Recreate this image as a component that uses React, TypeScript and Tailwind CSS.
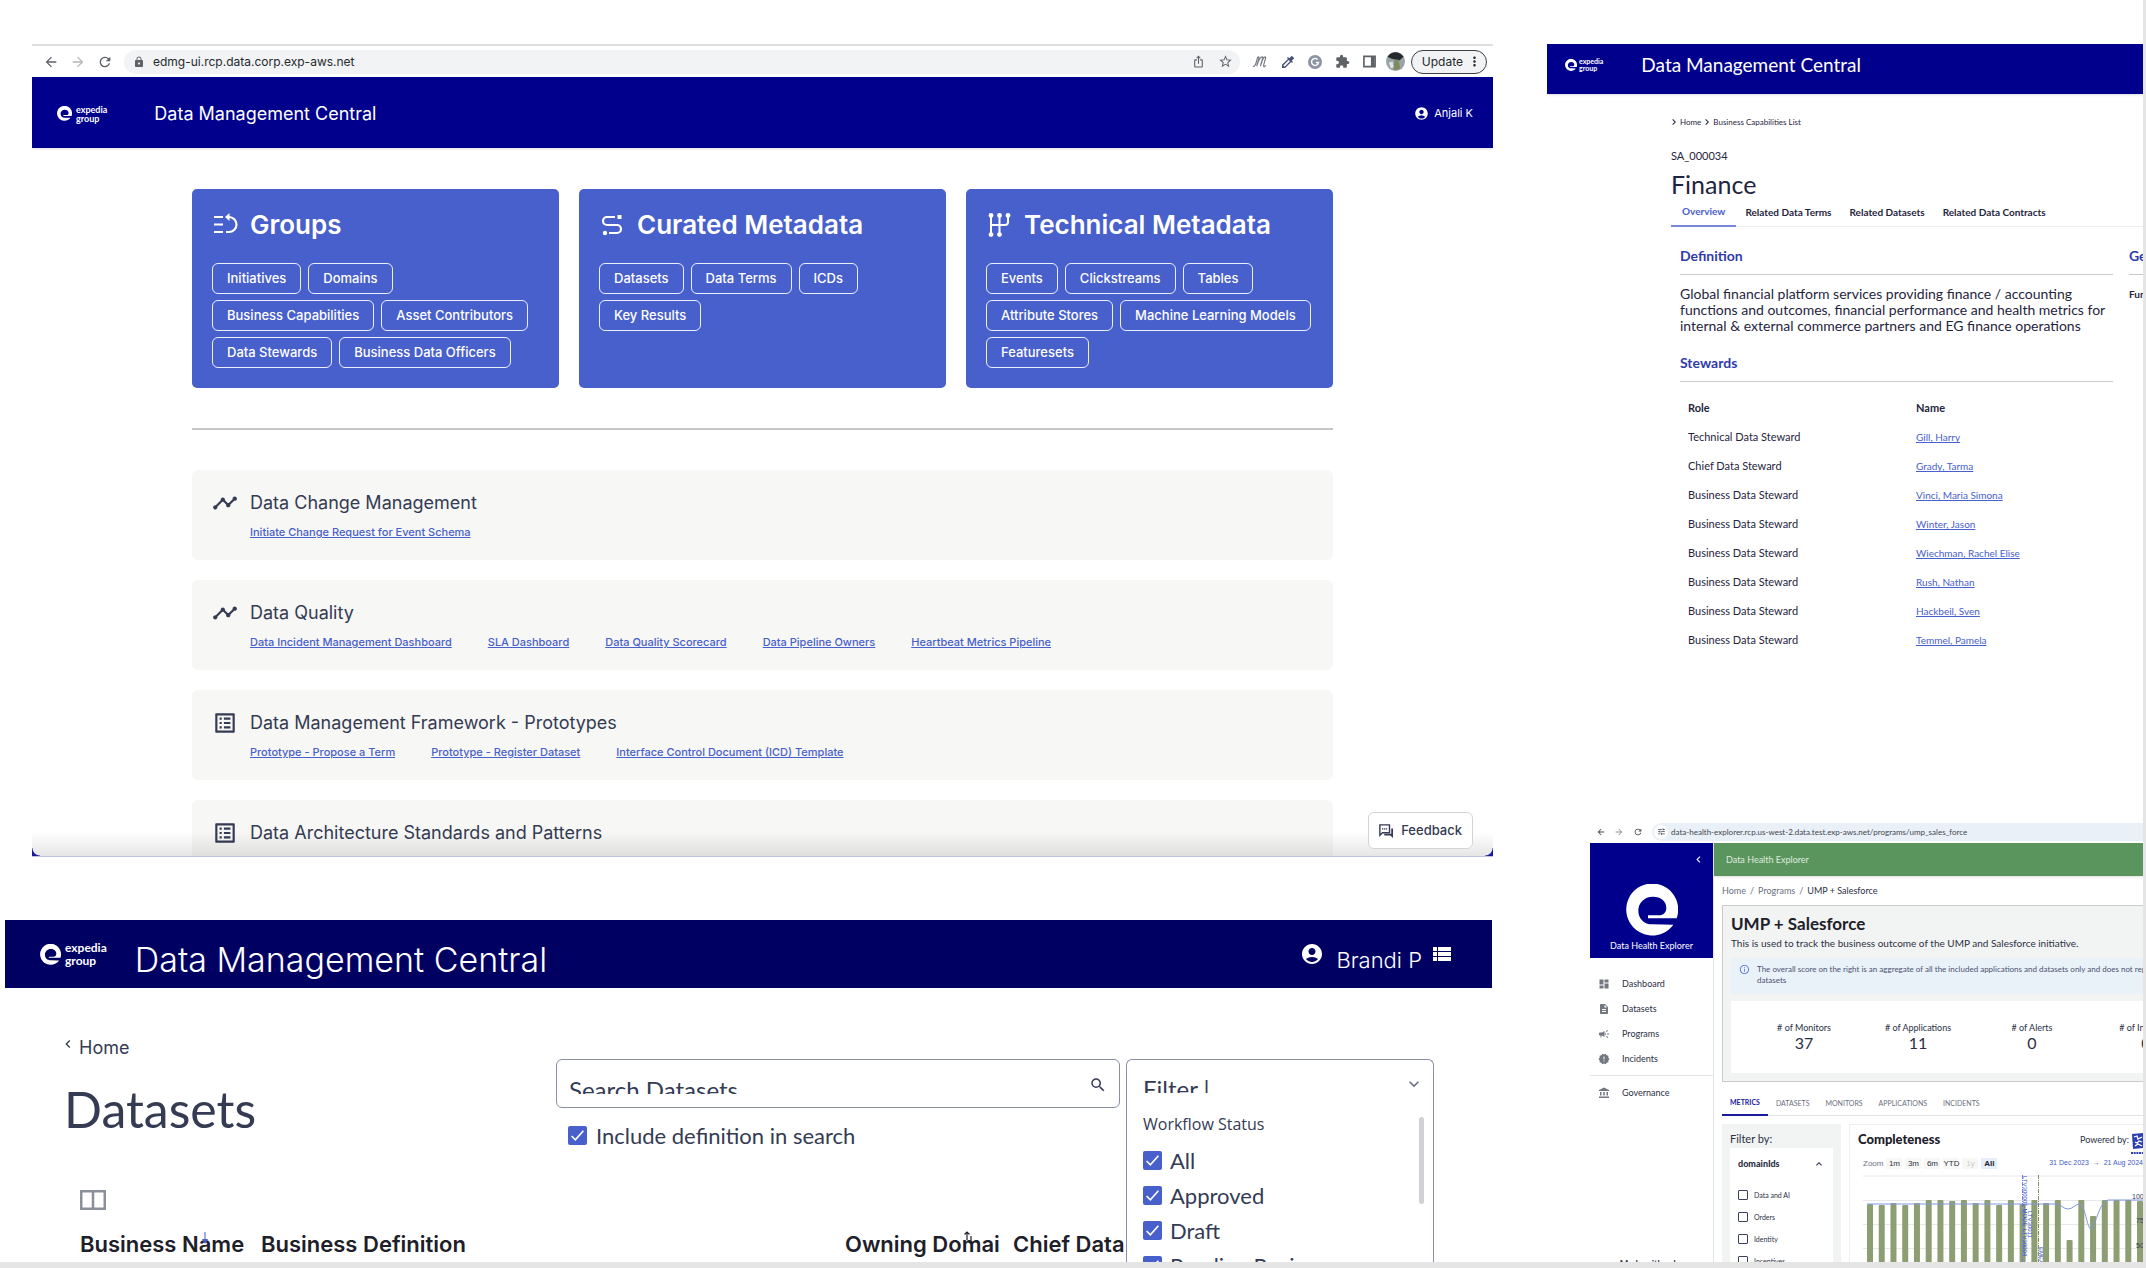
import React, { useState } from 'react';
import {
  MdAccountBalance,
  MdAccountCircle,
  MdArrowBack,
  MdArrowForward,
  MdCampaign,
  MdChevronLeft,
  MdChevronRight,
  MdColorize,
  MdDashboard,
  MdDescription,
  MdExpandLess,
  MdExpandMore,
  MdExtension,
  MdInfoOutline,
  MdIosShare,
  MdListAlt,
  MdLock,
  MdMoreVert,
  MdNewReleases,
  MdRefresh,
  MdSearch,
  MdStarBorder,
  MdTimeline,
  MdTune,
  MdViewList,
} from 'react-icons/md';

const CARDS = [
  {
    title: 'Groups',
    icon: 'groups',
    items: ['Initiatives', 'Domains', 'Business Capabilities', 'Asset Contributors', 'Data Stewards', 'Business Data Officers'],
  },
  { title: 'Curated Metadata', icon: 'curated', items: ['Datasets', 'Data Terms', 'ICDs', 'Key Results'] },
  {
    title: 'Technical Metadata',
    icon: 'technical',
    items: ['Events', 'Clickstreams', 'Tables', 'Attribute Stores', 'Machine Learning Models', 'Featuresets'],
  },
];

const SECTIONS = [
  { title: 'Data Change Management', icon: 'line', links: ['Initiate Change Request for Event Schema'] },
  {
    title: 'Data Quality',
    icon: 'line',
    links: ['Data Incident Management Dashboard', 'SLA Dashboard', 'Data Quality Scorecard', 'Data Pipeline Owners', 'Heartbeat Metrics Pipeline'],
  },
  {
    title: 'Data Management Framework - Prototypes',
    icon: 'list',
    links: ['Prototype - Propose a Term', 'Prototype - Register Dataset', 'Interface Control Document (ICD) Template'],
  },
  { title: 'Data Architecture Standards and Patterns', icon: 'list', links: [] },
];

const STEWARDS = [
  ['Technical Data Steward', 'Gill, Harry'],
  ['Chief Data Steward', 'Grady, Tarma'],
  ['Business Data Steward', 'Vinci, Maria Simona'],
  ['Business Data Steward', 'Winter, Jason'],
  ['Business Data Steward', 'Wiechman, Rachel Elise'],
  ['Business Data Steward', 'Rush, Nathan'],
  ['Business Data Steward', 'Hackbeil, Sven'],
  ['Business Data Steward', 'Temmel, Pamela'],
];

const STATS = [
  ['# of Monitors', '37'],
  ['# of Applications', '11'],
  ['# of Alerts', '0'],
  ['# of Incidents', '0'],
];

const BAR_TOPS = [29, 30, 28, 30, 28, 25, 25, 26, 25, 28, 25, 30, 25, 29, 25, 28, 25, 65, 25, 41, 25, 25, 25, 26];

const App: React.FC = () => (
  <div className="h-screen overflow-hidden bg-[#e4e5e4] pb-[6px] pr-[3px] font-['Inter',sans-serif] text-[#343b53]">
    <main className="grid h-full grid-cols-[1493fr_650fr] overflow-hidden bg-white">
      <div className="flex min-w-0 flex-col gap-[63px] overflow-hidden pt-11">
        <HomeWindow />
        <DatasetsWindow />
      </div>
      <div className="flex min-w-0 flex-col overflow-hidden pt-11 font-['Lato',sans-serif]">
        <FinanceWindow />
        <HealthWindow />
      </div>
    </main>
  </div>
);

const HomeWindow = () => (
  <section className="relative ml-8 h-[813px] shrink-0 overflow-hidden border-b border-[#b9c3ea] bg-white">
    <div className="flex h-[33px] items-center border-t-2 border-[#dfdfdf] pl-[11px] pr-[6px] text-[#5f6368]">
      <button aria-label="Back"><MdArrowBack size={16} /></button>
      <button aria-label="Forward" className="ml-[11px] text-[#b5b8bc]"><MdArrowForward size={16} /></button>
      <button aria-label="Reload" className="ml-[11px]"><MdRefresh size={16} /></button>
      <div className="ml-[11px] flex h-6 flex-1 items-center rounded-full bg-[#f1f3f4] pl-[9px] pr-[7px]">
        <MdLock size={12} />
        <input
          aria-label="Address"
          readOnly
          value="edmg-ui.rcp.data.corp.exp-aws.net"
          className="ml-2 flex-1 bg-transparent text-xs text-[#26292d] outline-none"
        />
        <MdIosShare size={13} />
        <MdStarBorder size={15} className="ml-[13px]" />
      </div>
      <svg viewBox="0 0 16 14" className="ml-3 h-[13px] w-[15px]" fill="none" stroke="#73777f" strokeWidth="1.200">
        <path d="M1 12c2 1 3-2 4-6s1-4 2-4 0 3-2 10c2-7 4-10 6-10s-1 4-2 10c2-7 3-10 5-10s-2 8-1.500 10 1.500 0 2-1" />
      </svg>
      <MdColorize size={16} className="ml-[13px] text-[#46507a]" />
      <svg viewBox="0 0 16 16" className="ml-[12px] size-[14px]">
        <circle cx="8" cy="8" r="8" fill="#8b93a5" />
        <path d="M11 5.2A4 4 0 1 0 12 8.6H9" fill="none" stroke="#fff" strokeWidth="1.6" />
      </svg>
      <MdExtension size={15} className="ml-[13px]" />
      <svg viewBox="0 0 14 14" className="ml-[13px] size-[13px]" fill="none" stroke="currentColor" strokeWidth="1.8">
        <path d="M1 1.5h12v11H1z" />
        <path d="M10.5 2v10" strokeWidth="4" />
      </svg>
      <svg viewBox="0 0 20 20" className="ml-[10px] size-[19px]">
        <circle cx="10" cy="10" r="10" fill="#9aa4a8" />
        <path d="M1.500 5A10 10 0 0 1 18.500 5L14 9 6 7z" fill="#26292d" />
        <path d="M9 8h4l2 9a10 10 0 0 1-7 2z" fill="#7d8b5c" />
        <path d="M3 11l4-1 1 6-3 1z" fill="#dfe3e6" />
      </svg>
      <button className="ml-[6px] flex h-6 items-center rounded-full border border-[#3c4043] bg-[#f1f3f4] pl-[10px] pr-[4px] text-xs text-[#26292d]">
        Update
        <MdMoreVert size={15} className="ml-1" />
      </button>
    </div>
    <header className="flex h-[71px] items-center bg-[#00008d] pl-[25px] pr-5 pt-[2px] text-white shadow">
      <ExpediaGroup className="gap-[4px]" mark="size-[15px]" text="text-[9px] leading-[9px]" />
      <h1 className="ml-[47px] text-lg">Data Management Central</h1>
      <div className="ml-auto flex items-center gap-[5px] text-[11px]">
        <MdAccountCircle size={15} />
        Anjali K
      </div>
    </header>

    <div className="px-40 pt-[41px]">
      <div className="grid grid-cols-3 gap-5">
        {CARDS.map(card => (
          <div key={card.title} className="rounded-[5px] bg-[#4860cc] p-5 text-white">
            <div className="flex h-8 items-center">
              <div className="w-[38px] shrink-0"><CardIcon name={card.icon} /></div>
              <h2 className="whitespace-nowrap text-[26px] font-semibold leading-8">{card.title}</h2>
            </div>
            <div className="mt-[22px] flex flex-wrap gap-x-[7px] gap-y-[6px]">
              {card.items.map(item => (
                <button key={item} className="h-[31px] rounded-md border border-white/90 px-[14px] text-[13px] font-medium">{item}</button>
              ))}
            </div>
          </div>
        ))}
      </div>

      <hr className="mb-10 mt-10 border-t-2 border-[#c6c6c6]" />

      <div className="flex flex-col gap-5">
        {SECTIONS.map(section => (
          <div key={section.title} className="flex h-[90px] rounded-md bg-[#f7f7f5] p-5 text-[#343b53]">
            <div className="flex h-[26px] w-[38px] shrink-0 items-center">
              {section.icon === 'line' ? <MdTimeline size={26} /> : <MdListAlt size={26} />}
            </div>
            <div>
              <h3 className="text-lg leading-[26px]">{section.title}</h3>
              <div className="mt-2 flex gap-9 text-[11px] font-medium leading-4 text-[#4860cc]">
                {section.links.map(link => (
                  <a key={link} href="#" className="underline">{link}</a>
                ))}
              </div>
            </div>
          </div>
        ))}
      </div>
    </div>

    <div className="absolute inset-x-0 bottom-0 h-6 bg-gradient-to-b from-transparent to-black/10" />
    <div className="absolute bottom-0 left-0 size-2 bg-[radial-gradient(circle_at_top_right,transparent_7px,#1a1a9c_8px)]" />
    <div className="absolute bottom-0 right-0 size-2 bg-[radial-gradient(circle_at_top_left,transparent_7px,#1a1a9c_8px)]" />
    <button className="absolute bottom-[7px] right-5 flex h-[37px] items-center gap-2 rounded-md border border-[#d4d4d8] bg-white px-[10px] text-[13px] font-medium">
      <svg viewBox="0 0 16 16" className="size-[14px]">
        <path d="M1 1h11v9H4l-3 3z" fill="none" stroke="currentColor" strokeWidth="1.6" />
        <path d="M3.500 5.500h6" stroke="currentColor" strokeWidth="1.400" strokeDasharray="1.500 .7" />
        <path d="M14 5h2v11l-3-3H6v-2h8z" fill="currentColor" />
      </svg>
      Feedback
    </button>
  </section>
);

const DatasetsWindow = () => (
  <section className="relative ml-[5px] mr-px flex min-h-0 flex-1 flex-col bg-white">
    <header className="flex h-[68px] shrink-0 items-center bg-[#000063] pl-[35px] pr-[38px] text-white">
      <ExpediaGroup className="gap-[4px]" mark="size-[21px]" text="text-[12px] leading-[13px]" />
      <h1 className="ml-7 mt-3 text-[34px] font-light leading-10">Data Management Central</h1>
      <div className="ml-auto flex items-center">
        <MdAccountCircle size={24} />
        <span className="ml-3 mt-3 text-[22px] font-light">Brandi P</span>
        <MdViewList size={24} className="ml-2" />
      </div>
    </header>

    <div className="flex">
      <div className="w-[551px] shrink-0 pl-[59px] pt-12">
        <a href="#" className="flex items-center text-lg leading-6">
          <MdChevronLeft size={16} className="-ml-1 mb-2" />
          <span className="ml-[3px]">Home</span>
        </a>
        <h2 className="mt-[23px] font-['Lato',sans-serif] text-[50px] leading-[52px]">Datasets</h2>
      </div>
      <div className="mr-[372px] flex-1 pt-[71px] font-['Lato',sans-serif]">
        <div className="flex h-[49px] items-start rounded-md border border-[#8a8fa3] pl-3 pr-3">
          <div className="mt-3 h-[22px] flex-1 overflow-hidden text-2xl">
            <input aria-label="Search Datasets" placeholder="Search Datasets" className="h-9 w-full leading-9 outline-none placeholder:text-[#343b53]" />
          </div>
          <MdSearch size={18} className="mt-4" />
        </div>
        <label className="mt-[15px] flex h-6 items-center gap-[9px] whitespace-nowrap pl-3 text-[22px]">
          <CheckBox />
          Include definition in search
        </label>
      </div>
    </div>

    <button aria-label="Columns" className="ml-[75px] mt-[43px] w-[26px] shrink-0 text-[#8a8f9b]">
      <svg viewBox="0 0 26 20" className="h-5 w-[26px]" fill="none" stroke="currentColor" strokeWidth="2.500">
        <path d="M1.250 1.250h23.500v17.500H1.250zM13 1v18" />
      </svg>
    </button>
    <div className="relative ml-[75px] mr-[364px] mt-5">
      <table className="w-full table-fixed text-left text-[22px] leading-7 text-[#1d2029]">
        <thead>
          <tr>
            <th className="w-[181px] whitespace-nowrap font-semibold">Business Name</th>
            <th className="font-semibold">Business Definition</th>
            <th className="w-[168px] whitespace-nowrap font-semibold">Owning Domai</th>
            <th className="w-[115px] whitespace-nowrap font-semibold">Chief Data</th>
          </tr>
        </thead>
      </table>
      <svg viewBox="0 0 8 12" className="absolute left-[121px] top-[2px] h-3 w-2" fill="#4860cc">
        <path d="M3.500 0h1v7H7L4 12 1 7h2.500z" />
      </svg>
      <svg viewBox="0 0 12 14" className="absolute left-[883px] top-[1px] h-[14px] w-3" fill="none" stroke="#1d2029" strokeWidth="1.200">
        <path d="M4 9V1M1.500 3.500L4 1l2.500 2.500M8 5v8M5.500 10.500L8 13l2.500-2.500" />
      </svg>
    </div>

    <FilterPanel />
  </section>
);

const FilterPanel = () => (
  <div className="absolute bottom-0 right-[58px] top-[139px] w-[308px] overflow-hidden rounded-t-md border border-b-0 border-[#8a8fa3] bg-white pl-4 pr-[9px] font-['Lato',sans-serif]">
    <button className="flex h-[50px] w-full items-start justify-between text-2xl">
      <span className="mt-[11px] h-[22px] overflow-hidden leading-9">Filter |</span>
      <MdExpandMore size={20} className="mt-[14px] text-[#6d7285]" />
    </button>
    <div className="flex justify-between">
      <div>
        <p className="mt-[2px] font-['Open_Sans',sans-serif] text-base leading-6">Workflow Status</p>
        <div className="mt-[7px] flex flex-col">
          {['All', 'Approved', 'Draft', 'Pending Review'].map(status => (
            <label key={status} className="flex h-[35px] items-center gap-2 whitespace-nowrap text-[22px]">
              <CheckBox />
              {status}
            </label>
          ))}
        </div>
      </div>
      <div className="mt-[7px] h-[87px] w-[5px] rounded-full bg-[#d0d1d4]" />
    </div>
  </div>
);

const FinanceWindow = () => (
  <section className="ml-[54px] h-[776px] shrink-0 overflow-hidden bg-white text-[#1f2540]">
    <header className="flex h-[50px] items-center bg-[#00008d] pb-2 pl-[18px] text-white shadow">
      <ExpediaGroup className="gap-[2px]" mark="size-3" text="text-[7px] leading-[7px]" />
      <h1 className="ml-[38px] text-[19px]">Data Management Central</h1>
    </header>
    <div className="pl-[124px] pt-[22px]">
      <nav className="flex items-center text-[8px] leading-3">
        <MdChevronRight size={12} className="-ml-[3px]" />
        <a href="#">Home</a>
        <MdChevronRight size={12} />
        <a href="#">Business Capabilities List</a>
      </nav>
      <p className="mt-[21px] text-[11px] leading-[14px]">SA_000034</p>
      <h2 className="mt-[6px] text-[25px] leading-[30px]">Finance</h2>
      <div className="mt-[5px] flex border-b border-[#eeeeee] text-[10px] font-bold leading-[14px]">
        <button className="-mb-px border-b-2 border-[#7788dd] px-[11px] pb-[7px] text-[#4860cc]">Overview</button>
        <button className="px-[9px] pb-[7px]">Related Data Terms</button>
        <button className="px-[9px] pb-[7px]">Related Datasets</button>
        <button className="px-[9px] pb-[7px]">Related Data Contracts</button>
      </div>
      <div className="grid grid-cols-[433px_1fr] gap-4 overflow-hidden pl-[9px] pt-5">
        <div>
          <h3 className="border-b border-[#c9cccf] pb-[9px] text-sm font-bold leading-[18px] text-[#2f3bab]">Definition</h3>
          <p className="mt-[11px] text-sm leading-4">
            Global financial platform services providing finance / accounting
            <br />
            functions and outcomes, financial performance and health metrics for
            <br />
            internal &amp; external commerce partners and EG finance operations
          </p>
          <h3 className="mt-5 border-b border-[#c9cccf] pb-[9px] text-sm font-bold leading-[18px] text-[#2f3bab]">Stewards</h3>
          <table className="ml-2 mt-3 w-[410px] table-fixed text-left text-[11px]">
            <thead>
              <tr className="h-[29px]">
                <th className="w-[228px] font-bold">Role</th>
                <th className="font-bold">Name</th>
              </tr>
            </thead>
            <tbody>
              {STEWARDS.map(([role, name]) => (
                <tr key={name} className="h-[29px]">
                  <td>{role}</td>
                  <td><a href="#" className="text-[10px] text-[#4860cc] underline">{name}</a></td>
                </tr>
              ))}
            </tbody>
          </table>
        </div>
        <div className="overflow-hidden whitespace-nowrap">
          <h3 className="border-b border-[#c9cccf] pb-[9px] text-sm font-bold leading-[18px] text-[#2f3bab]">General</h3>
          <p className="mt-[11px] text-[10px] font-bold leading-4">Function</p>
        </div>
      </div>
    </div>
  </section>
);

const NAV = [
  { label: 'Dashboard', Icon: MdDashboard },
  { label: 'Datasets', Icon: MdDescription },
  { label: 'Programs', Icon: MdCampaign },
  { label: 'Incidents', Icon: MdNewReleases },
];

const HealthWindow = () => (
  <section className="ml-[97px] flex min-h-0 flex-1 flex-col overflow-hidden bg-white text-[#2b3045]">
    <div className="flex h-[23px] shrink-0 items-center pl-[6px] text-[#44484f]">
      <button aria-label="Back"><MdArrowBack size={10} /></button>
      <button aria-label="Forward" className="ml-2 text-[#8f939a]"><MdArrowForward size={10} /></button>
      <button aria-label="Reload" className="ml-[9px]"><MdRefresh size={10} /></button>
      <div className="ml-[9px] flex h-[18px] flex-1 items-center rounded-l-full bg-[#e9f0f8] pl-[2px]">
        <span className="grid size-[14px] place-items-center rounded-full bg-white"><MdTune size={9} /></span>
        <input
          aria-label="Address"
          readOnly
          value="data-health-explorer.rcp.us-west-2.data.test.exp-aws.net/programs/ump_sales_force"
          className="ml-[3px] min-w-0 flex-1 bg-transparent text-[8px] outline-none"
        />
      </div>
    </div>

    <div className="flex min-h-0 flex-1">
      <aside className="flex w-[124px] shrink-0 flex-col overflow-hidden border-r border-[#e3e4e6]">
        <div className="flex h-[115px] shrink-0 flex-col items-center bg-[#00008d] text-white">
          <button aria-label="Collapse" className="mr-[8px] mt-[10px] self-end"><MdChevronLeft size={13} /></button>
          <ExpediaMark className="mt-[18px] size-[52px]" />
          <p className="mt-1 text-[9px] leading-3">Data Health Explorer</p>
        </div>
        <nav className="flex flex-col pt-[13px] text-[9px]">
          {NAV.map(({ label, Icon }) => (
            <a key={label} href="#" className="flex h-[25px] items-center pl-2">
              <Icon size={12} className="text-[#73777f]" />
              <span className="ml-3">{label}</span>
            </a>
          ))}
          <a href="#" className="mt-1 flex h-[34px] items-center border-t border-[#e3e4e6] pl-2">
            <MdAccountBalance size={12} className="text-[#73777f]" />
            <span className="ml-3">Governance</span>
          </a>
        </nav>
        <p className="mt-[149px] flex items-center justify-center gap-[3px] whitespace-nowrap text-[9px] font-bold leading-3">
          Made with <span className="size-[5px] bg-[#8d9f72]" /> by
        </p>
      </aside>

      <div className="min-w-0 flex-1 overflow-hidden">
        <header className="flex h-[33px] items-center bg-[#5b955e] pl-3 text-[9px] text-[#dfeadf] shadow">Data Health Explorer</header>
        <nav className="flex h-[29px] items-center gap-1 pl-2 text-[9px] text-[#6b7080]">
          <a href="#">Home</a>
          <span>/</span>
          <a href="#">Programs</a>
          <span>/</span>
          <span className="text-[#2b3045]">UMP + Salesforce</span>
        </nav>
        <div className="ml-2 h-[177px] overflow-hidden border border-r-0 border-[#c9cccc] bg-[#f2f4f3] pl-2 pt-[7px]">
          <h2 className="text-[17px] font-bold leading-[22px] text-[#1d2029]">UMP + Salesforce</h2>
          <p className="mt-[2px] text-[10px] leading-3">This is used to track the business outcome of the UMP and Salesforce initiative.</p>
          <div className="mt-[9px] flex h-[36px] gap-[7px] bg-[#e9f1f9] pl-2 pt-[6px] text-[8px] leading-[11px] text-[#4c5270]">
            <MdInfoOutline size={11} className="shrink-0 text-[#5f78d8]" />
            <p className="whitespace-nowrap">
              The overall score on the right is an aggregate of all the included applications and datasets only and does not represent
              <br />
              datasets
            </p>
          </div>
          <div className="mt-[7px] flex h-[72px] bg-white pl-4 pt-5">
            {STATS.map(([label, value]) => (
              <div key={label} className="w-[114px] shrink-0 text-center">
                <p className="text-[9px] leading-[14px]">{label}</p>
                <p className="text-base leading-4">{value}</p>
              </div>
            ))}
          </div>
        </div>
        <div className="ml-2 mt-[13px] flex border-b border-[#e3e4e6] text-[7px] leading-[14px] text-[#6b7080]">
          <button className="-mb-px border-b-2 border-[#1a1a9c] px-2 pb-[5px] font-bold text-[#1a1a9c]">METRICS</button>
          <button className="px-2 pb-[5px]">DATASETS</button>
          <button className="px-2 pb-[5px]">MONITORS</button>
          <button className="px-2 pb-[5px]">APPLICATIONS</button>
          <button className="px-2 pb-[5px]">INCIDENTS</button>
        </div>
        <div className="mt-2 flex pl-2">
          <DomainFilter />
          <Completeness />
        </div>
      </div>
    </div>
  </section>
);

const DomainFilter = () => (
  <div className="w-[119px] shrink-0 bg-[#f2f3f3] px-2 pt-[7px]">
    <p className="text-[11px] leading-4">Filter by:</p>
    <div className="mt-px bg-white px-2 pt-[9px]">
      <button className="flex w-full items-center justify-between text-[9px] font-black leading-[14px]">
        domainIds
        <MdExpandLess size={12} />
      </button>
      <div className="mt-[13px] flex flex-col">
        {['Data and AI', 'Orders', 'Identity', 'Incentives'].map(name => (
          <label key={name} className="flex h-[22px] items-center gap-[6px] text-[7px]">
            <input type="checkbox" className="size-[10px] appearance-none rounded-[1px] border border-[#3b415c]" />
            {name}
          </label>
        ))}
      </div>
    </div>
  </div>
);

const Completeness = () => {
  const [range, setRange] = useState('All');

  return (
    <div className="ml-2 min-w-0 flex-1 border-l border-t border-[#eeeff0] pt-[7px]">
      <div className="flex h-4 items-center pl-2">
        <h3 className="text-[13px] font-black text-[#1d2029]">Completeness</h3>
        <span className="ml-auto whitespace-nowrap text-[9px]">Powered by:</span>
        <svg viewBox="0 0 12 22" className="ml-[2px] mt-2 h-[22px] w-3 shrink-0">
          <path d="M1 1l11-1v15l-10 1z" fill="#2c3fb0" />
          <path d="M3 4l3-1 1 3 4-2M4 9l2 1 2-2 3 1M4 13l3-2 4 2" stroke="#fff" strokeWidth="1.300" fill="none" />
          <path d="M0 20h12" stroke="#2c3fb0" strokeWidth="2" strokeDasharray="2 .7" />
        </svg>
      </div>
      <div className="mt-[10px] flex h-[11px] items-center gap-[3px] pl-[13px] font-['Liberation_Sans',sans-serif] text-[8px]">
        <span className="text-[#6b7080]">Zoom</span>
        {['1m', '3m', '6m', 'YTD', '1y', 'All'].map(r => (
          <button
            key={r}
            onClick={() => setRange(r)}
            className={`h-[11px] w-4 leading-[11px] ${r === range ? 'bg-[#e6eefb] font-bold text-[#1d2029]' : r === '1y' ? 'bg-[#f7f7f5] text-[#c9cccf]' : 'bg-[#f7f7f5]'}`}
          >
            {r}
          </button>
        ))}
        <span className="ml-auto whitespace-nowrap text-[7px] text-[#3f5bc4]">31 Dec 2023 &nbsp;→&nbsp; 21 Aug 2024</span>
      </div>
      <svg viewBox="0 0 281 87" className="ml-[13px] mt-[6px] h-[87px] w-[281px]">
        <path d="M0 1h281M0 25.500h281M0 49.500h281M0 73.500h281" stroke="#e6e8ea" />
        {BAR_TOPS.map((top, i) => (
          <rect key={i} x={4 + i * 11.74} y={top} width="6" height={100} rx="1" fill="#8d9f72" />
        ))}
        <path
          d="M4 29H193C198 29 200 34 205 34S212 29 217 29C222 29 224 54 228 54S236 25 246 25H281"
          fill="none"
          stroke="#8098e0"
        />
        <path d="M159.500 0v87" stroke="#6f86dc" strokeDasharray="4 1 1 1" />
        <path d="M175.500 0v87" stroke="#7d9460" strokeDasharray="4 1 1 1" />
        <g fill="#2f4bc8" fontSize="6" fontFamily="Liberation Sans">
          <text transform="translate(160 1) rotate(90)">LTV300001-MODE</text>
          <text transform="translate(160 54) rotate(90)">LTV30004</text>
          <text transform="translate(165 36) rotate(90)">LTV30011</text>
          <text transform="translate(176 72) rotate(90)">EMEA</text>
        </g>
        <g fill="#343b53" fontSize="7" fontFamily="Liberation Sans">
          <text x="269" y="24">100</text>
          <text x="273" y="48">75</text>
          <text x="273" y="73">50</text>
        </g>
      </svg>
    </div>
  );
};

// Helpers
const CheckBox = () => (
  <span className="grid size-[19px] shrink-0 place-items-center">
    <input type="checkbox" defaultChecked className="col-start-1 row-start-1 size-[19px] appearance-none rounded-[2px] bg-[#4860cc]" />
    <svg viewBox="0 0 14 14" className="pointer-events-none col-start-1 row-start-1 size-[15px]" fill="none" stroke="#fff" strokeWidth="1.500">
      <path d="M1.500 7.500L5 11l7.500-8.500" />
    </svg>
  </span>
);

const ExpediaMark = ({ className }: { className: string }) => (
  <svg viewBox="136 41 156 156" className={className} fill="currentColor">
    <path d="M288 144A78 78 0 1 0 278 163L215 162C190 162 173 145 173 121C173 98 190 79 217 79C240 79 257 92 257 113C257 126 248 135 235 135H202V144Z" />
  </svg>
);

const ExpediaGroup = ({ className, mark, text }: { className: string; mark: string; text: string }) => (
  <div className={`flex items-center ${className}`}>
    <ExpediaMark className={mark} />
    <p className={`font-['Lato',sans-serif] font-bold ${text}`}>
      expedia
      <br />
      group
    </p>
  </div>
);

const CardIcon = ({ name }: { name: string }) => {
  switch (name) {
    case 'groups':
      return (
        <svg viewBox="0 0 26 24" className="h-6 w-[26px]" fill="none" stroke="currentColor" strokeWidth="2.200">
          <path d="M2 4h9M2 11.500h9M2 19h9M14 19h3a7.500 7.500 0 0 0 0-15h-2" />
          <path d="M17.500 0v8l-4.500-4z" fill="currentColor" stroke="none" />
        </svg>
      );
    case 'curated':
      return (
        <svg viewBox="0 0 26 24" className="h-6 w-[26px]" fill="none" stroke="currentColor" strokeWidth="2.200">
          <path d="M16 4H8a4 4 0 0 0 0 8h10a4 4 0 0 1 0 8H10" />
          <path d="M18.500 2h4v4h-4z" fill="currentColor" stroke="none" />
          <circle cx="6" cy="20" r="2.200" fill="currentColor" stroke="none" />
        </svg>
      );
    default:
      return (
        <svg viewBox="0 0 26 24" className="h-6 w-[26px]" fill="none" stroke="currentColor" strokeWidth="2">
          <path d="M5 2v20M13.500 2v20M5 12h14q3 0 3-3V2" />
          <g fill="currentColor" stroke="none">
            <circle cx="5" cy="2.400" r="2.400" />
            <circle cx="13.500" cy="2.400" r="2.400" />
            <circle cx="22" cy="2.400" r="2.400" />
            <circle cx="5" cy="21.600" r="2.400" />
            <circle cx="13.500" cy="21.600" r="2.400" />
          </g>
        </svg>
      );
  }
};

export default App;
